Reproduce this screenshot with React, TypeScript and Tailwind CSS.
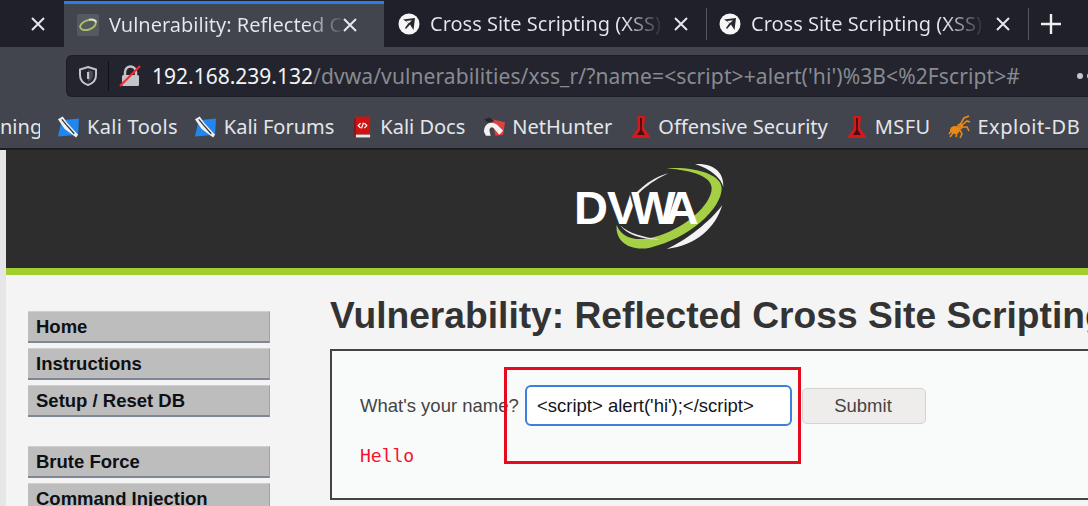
import React from "react";

const X = ({ cls = "" }: { cls?: string }) => (
  <svg viewBox="0 0 16 16" className={"w-[16px] h-[16px] shrink-0 " + cls}>
    <path d="M2 2 L14 14 M14 2 L2 14" stroke="#e6e7ea" strokeWidth="2" />
  </svg>
);

const Plane = () => (
  <svg viewBox="0 0 22 22" className="w-[22px] h-[22px] shrink-0">
    <circle cx="11" cy="11" r="10.5" fill="#f7f7f7" />
    <path d="M5 6.5 L17 5 L15.5 17 L12 11.5 L8 16 L7 15 L10.5 10 Z" fill="#26272d" />
    <path d="M8 8 L14 7.3 L10.8 10.2 Z" fill="#f7f7f7" />
  </svg>
);

const KaliIcon = () => (
  <svg viewBox="0 0 24 24" className="w-[23px] h-[24px] shrink-0">
    <path d="M5 5 L23 3 L22 20 L1 22 Z" fill="#2186ee" />
    <path d="M1 4 L6 1 L11 8 L22 20 L20 23 L8 14 Z" fill="#f1f1f1" />
    <path d="M5 4 L10 10 L18 19" stroke="#33363d" strokeWidth="1.4" fill="none" />
  </svg>
);

const DocsIcon = () => (
  <svg viewBox="0 0 20 24" className="w-[19px] h-[24px] shrink-0">
    <path d="M2 1 H18 V20 H2 Z" fill="#cf1313" />
    <path d="M1 3 H3 V23 H1 Z" fill="#7d1a1a" />
    <path d="M3 20 H18 V23 H3 Z" fill="#e9e9e9" />
    <path d="M8 8 L5.5 10.5 L8 13 M12 8 L14.5 10.5 L12 13 M11 7.5 L9 13.5" stroke="#fff" strokeWidth="1.3" fill="none" />
  </svg>
);

const NetIcon = () => (
  <svg viewBox="0 0 24 24" className="w-[23px] h-[24px] shrink-0">
    <path d="M9 4 L23 7 L21 20 L13 21 Z" fill="#e2403e" />
    <path d="M1 17 C1 8 9 5 15 10 L21 16 L17 20 L11 13 C8 11 6 14 7 17 L8 21 H3 Z" fill="#f2f2f2" />
    <path d="M1 4 L7 2 L12 6 L5 7 Z" fill="#26272c" />
  </svg>
);

const Flask = () => (
  <svg viewBox="0 0 20 24" className="w-[20px] h-[24px] shrink-0">
    <path d="M6 1 H14 L13 13 L20 23 H0 L7 13 Z" fill="#d3191b" />
    <path d="M9 3 H11 L10.8 15 L14 20 H6 L9.2 15 Z" fill="#4a0c10" />
  </svg>
);

const Spider = () => (
  <svg viewBox="0 0 24 24" className="w-[24px] h-[24px] shrink-0" fill="none" stroke="#e68a1c" strokeWidth="1.6">
    <ellipse cx="8" cy="15" rx="5" ry="4" fill="#e68a1c" stroke="none" />
    <circle cx="13" cy="11.5" r="3" fill="#d9801a" stroke="none" />
    <path d="M13 10 L17 3 L22 1 M14 11 L20 6 L23 7 M14 12 L20 12 L22 16 M12 13 L15 19 L13 23 M10 17 L9 22 M7 12 L2 19 M6 18 L3 22" />
  </svg>
);

const Logo = () => (
  <div className="relative w-[160px] h-[95px]">
    <svg viewBox="90 30 480 285" className="absolute inset-0 w-full h-full">
      <path d="M465 42 C515 40 552 60 550 112 C545 85 510 55 465 42 Z" fill="#f4f4f4" />
      <path d="M547 165 C525 235 470 285 380 297 C440 270 510 215 547 165 Z" fill="#f4f4f4" />
      <path d="M380 55 C470 50 545 75 545 115 C545 175 450 265 330 293 C270 305 225 275 230 225 C245 265 290 275 340 262 C430 240 515 165 515 115 C515 80 460 62 380 55 Z" fill="#a5cf45" />
      <path d="M385 70 C330 85 270 130 255 190 C275 140 330 95 385 70 Z" fill="#ececec" />
      <path d="M240 225 C260 255 310 270 360 268 C310 262 265 250 240 225 Z" fill="#ececec" />
    </svg>
    <span className="absolute left-[4px] top-[21px] text-[47px] leading-[54px] font-bold text-white [font-family:'Liberation_Sans',sans-serif]">
      <span className="tracking-[-1px]">D</span>
      <span className="tracking-[-7px]">V</span>
      <span className="tracking-[-11px] [text-shadow:-2px_0_0_#2d2d2d]">W</span>
      <span>A</span>
    </span>
  </div>
);

const Bookmark = ({ icon, label, cls, textCls = "" }: { icon?: React.ReactNode; label: string; cls: string; textCls?: string }) => (
  <div className={"flex items-center shrink-0 " + cls}>
    {icon}
    <span className={"text-[20px] leading-[28px] text-[#e4e6ea] whitespace-nowrap " + textCls}>{label}</span>
  </div>
);

const Nav = ({ label }: { label: string }) => (
  <div className="h-[32px] w-[242px] bg-[#bdbdbd] border-t border-t-[#cfcfcf] border-r border-r-[#9ea3ab] border-b-2 border-b-[#7f8797] pl-[8px] pt-[1px] flex items-center text-[18.5px] font-bold text-[#0d1014]">
    {label}
  </div>
);

export default function App() {
  return (
    <div className="w-[1088px] h-[506px] overflow-hidden bg-[#f4f4f4] [font-family:'Noto_Sans',sans-serif]">
      {/* tab strip */}
      <div className="h-[47px] bg-[#1f2029] flex">
        <div className="w-[64px] shrink-0 flex items-center pl-[30px] pt-[1px]">
          <X />
        </div>
        <div className="w-[320px] shrink-0 bg-[#42454e] border-t-[3px] border-[#2a7de1] mt-[1px] flex items-center pl-[13px] pb-[1px]">
          <div className="w-[22px] h-[22px] bg-[#565a60] rounded-[2px] flex items-center justify-center shrink-0">
            <svg viewBox="0 0 22 22" className="w-[20px] h-[20px]">
              <ellipse cx="11" cy="11" rx="9" ry="5" fill="none" stroke="#a9c468" strokeWidth="2" transform="rotate(-20 11 11)" />
              <path d="M12 5 A9 5 -20 0 1 20 8" stroke="#dfe3dc" strokeWidth="2" fill="none" />
            </svg>
          </div>
          <span className="ml-[10px] w-[234px] overflow-hidden whitespace-nowrap text-[20px] leading-[28px] bg-clip-text text-transparent bg-[linear-gradient(90deg,#e6e8ec_84%,#4a4d56_100%)]">
            Vulnerability: Reflected Cross
          </span>
          <X cls="ml-[-1px]" />
        </div>
        <div className="w-[322px] shrink-0 flex items-center pl-[14px]">
          <Plane />
          <span className="ml-[10px] w-[236px] overflow-hidden whitespace-nowrap text-[20px] leading-[28px] bg-clip-text text-transparent bg-[linear-gradient(90deg,#e6e8ec_82%,#2c2d36_98%)]">
            Cross Site Scripting (XSS) and
          </span>
          <X cls="ml-[7px]" />
        </div>
        <div className="w-px h-[32px] mt-[8px] bg-[#55575f] shrink-0" />
        <div className="w-[321px] shrink-0 flex items-center pl-[12px]">
          <Plane />
          <span className="ml-[10px] w-[236px] overflow-hidden whitespace-nowrap text-[20px] leading-[28px] bg-clip-text text-transparent bg-[linear-gradient(90deg,#e6e8ec_82%,#2c2d36_98%)]">
            Cross Site Scripting (XSS) and
          </span>
          <X cls="ml-[8px]" />
        </div>
        <div className="w-px h-[32px] mt-[8px] bg-[#55575f] shrink-0" />
        <div className="ml-[12px] flex items-center">
          <svg viewBox="0 0 20 20" className="w-[20px] h-[20px]">
            <path d="M10 0 V20 M0 10 H20" stroke="#eceef0" strokeWidth="2.4" />
          </svg>
        </div>
      </div>

      {/* toolbar */}
      <div className="h-[50px] bg-[#42454e] pl-[66px] pt-[8px]">
        <div className="h-[42px] bg-[#23242d] rounded-l-[6px] border border-[#1c1d24] border-r-0 flex items-center pl-[11px] overflow-hidden">
          <svg viewBox="0 0 20 22" className="w-[20px] h-[22px] shrink-0">
            <path d="M10 2 L18 4.5 V10 C18 15 14.5 18.5 10 20 C5.5 18.5 2 15 2 10 V4.5 Z" fill="none" stroke="#c3c4c8" strokeWidth="2" />
            <path d="M10 5 L15 6.5 V10 C15 13 13 15.5 10 17 Z" fill="#c3c4c8" opacity="0.25" />
            <rect x="9" y="7" width="2.2" height="7" fill="#c3c4c8" />
          </svg>
          <div className="w-px h-[30px] bg-[#101117] ml-[10px] shrink-0" />
          <svg viewBox="0 0 22 24" className="w-[22px] h-[24px] ml-[10px] shrink-0">
            <path d="M6 11 V8 A5.5 5.5 0 0 1 17 8 V11" fill="none" stroke="#c3c4c8" strokeWidth="2.4" />
            <rect x="3" y="11" width="17" height="11" rx="1.5" fill="#c3c4c8" />
            <path d="M1 22 L21 2" stroke="#e8303a" strokeWidth="2.2" />
          </svg>
          <span className="ml-[11px] text-[21px] leading-[28px] whitespace-nowrap text-[#f1f3f5]">
            192.168.239.132<span className="text-[#888b92] tracking-[0.1px]">/dvwa/vulnerabilities/xss_r/?name=&lt;script&gt;+alert('hi')%3B&lt;%2Fscript&gt;#</span>
          </span>
          <div className="ml-[57px] flex gap-[4px] shrink-0">
            <div className="w-[6px] h-[6px] rounded-full bg-[#c6c7cb]" />
            <div className="w-[6px] h-[6px] rounded-full bg-[#c6c7cb]" />
          </div>
        </div>
      </div>

      {/* bookmarks */}
      <div className="h-[53px] bg-[#42454e] border-b-2 border-[#1c1c21] flex items-start pt-[16px] overflow-hidden">
        <Bookmark label="ning" cls="" textCls="w-[40px] overflow-hidden" />
        <Bookmark icon={<KaliIcon />} label="Kali Tools" cls="ml-[17px] gap-[7px]" textCls="tracking-[0.3px]" />
        <Bookmark icon={<KaliIcon />} label="Kali Forums" cls="ml-[16px] gap-[7px]" />
        <Bookmark icon={<DocsIcon />} label="Kali Docs" cls="ml-[19px] gap-[8px]" />
        <Bookmark icon={<NetIcon />} label="NetHunter" cls="ml-[18px] gap-[6px]" />
        <Bookmark icon={<Flask />} label="Offensive Security" cls="ml-[19px] gap-[7px]" />
        <Bookmark icon={<Flask />} label="MSFU" cls="ml-[19px] gap-[8px]" textCls="tracking-[0.4px]" />
        <Bookmark icon={<Spider />} label="Exploit-DB" cls="ml-[17px] gap-[6px]" textCls="tracking-[0.5px]" />
      </div>

      {/* page */}
      <div className="flex h-[356px] [font-family:'Liberation_Sans',sans-serif]">
        <div className="w-[6px] shrink-0 bg-[#e6e6e6]" />
        <div className="w-[1082px] shrink-0">
          <div className="h-[118px] bg-[#2d2d2d] pt-[10px] pl-[564px]">
            <Logo />
          </div>
          <div className="h-[7px] bg-[#a3cf2d]" />
          <div className="flex">
            <div className="w-[264px] shrink-0 pl-[22px] pt-[36px]">
              <div className="flex flex-col gap-[5px]">
                <Nav label="Home" />
                <Nav label="Instructions" />
                <Nav label="Setup / Reset DB" />
              </div>
              <div className="flex flex-col gap-[5px] mt-[29px]">
                <Nav label="Brute Force" />
                <Nav label="Command Injection" />
              </div>
            </div>
            <div className="ml-[60px] w-[800px] shrink-0">
              <h1 className="mt-[20px] text-[37.2px] leading-[40px] font-bold text-[#333] whitespace-nowrap">
                Vulnerability: Reflected Cross Site Scripting (XSS)
              </h1>
              <div className="relative mt-[14px] h-[151px] bg-[#f9fafa] border-2 border-[#444] pl-[28px] pt-[34px]">
                <div className="flex items-center">
                  <span className="w-[165px] shrink-0 text-[18.5px] text-[#444] whitespace-nowrap">What's your name?</span>
                  <input
                    readOnly
                    value="<script> alert('hi');</script>"
                    className="w-[267px] h-[41px] bg-white border-2 border-[#3a80dc] rounded-[6px] px-[10px] text-[18.5px] text-[#15161a] outline-none"
                  />
                  <button className="ml-[10px] w-[124px] h-[36px] pr-[2px] bg-[#efedeb] border border-[#d6d3cf] rounded-[5px] text-[18.5px] text-[#444]">
                    Submit
                  </button>
                </div>
                <div className="mt-[18px] text-[18px] leading-[24px] text-[#f5132d] [font-family:'DejaVu_Sans_Mono',monospace]">
                  Hello
                </div>
                <div className="absolute left-[172px] top-[16px] w-[297px] h-[97px] border-[3px] border-[#e60a1e]" />
              </div>
            </div>
          </div>
        </div>
      </div>
    </div>
  );
}
